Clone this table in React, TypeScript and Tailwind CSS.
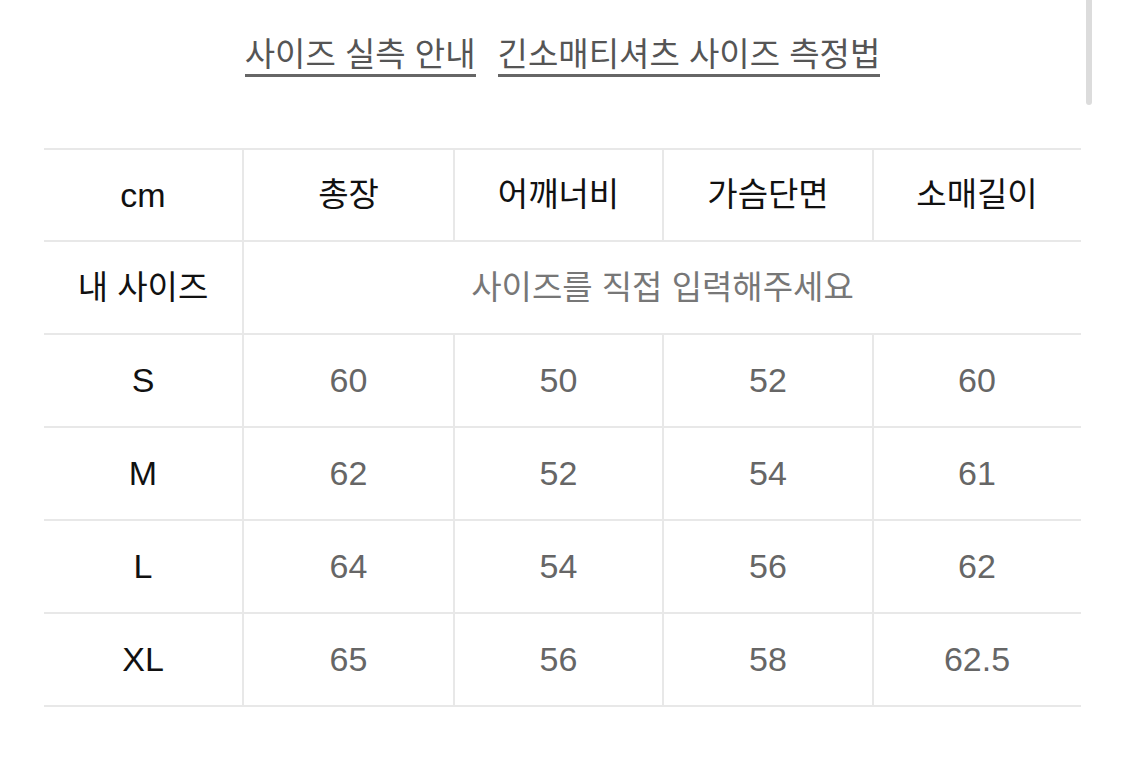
const rows = [
  { size: 'S', values: ['60', '50', '52', '60'] },
  { size: 'M', values: ['62', '52', '54', '61'] },
  { size: 'L', values: ['64', '54', '56', '62'] },
  { size: 'XL', values: ['65', '56', '58', '62.5'] },
];

const headers = ['총장', '어깨너비', '가슴단면', '소매길이'];
const colWidths = ['w-[211px]', 'w-[209px]', 'w-[210px]', 'w-[208px]'];

const font = { fontFamily: '"Liberation Sans", "Noto Sans CJK KR", sans-serif' };

export default function App() {
  return (
    <div className="relative w-[1125px] h-[764px] bg-white overflow-hidden" style={font}>
      {/* scrollbar thumb */}
      <div className="absolute right-[33px] top-0 w-[6px] h-[105px] rounded-b-full bg-[#dcdcdc]" />

      <div className="flex justify-center gap-[22px] pt-[36px] text-[33px] text-[#555]">
        <span className="leading-[38px] border-b-[3px] border-[#666]">사이즈 실측 안내</span>
        <span className="leading-[38px] border-b-[3px] border-[#666]">긴소매티셔츠 사이즈 측정법</span>
      </div>

      <div className="ml-[44px] mt-[71px] w-[1037px] border-t-2 border-[#e8e8e8]">
        <div className="flex h-[92px] border-b-2 border-[#e8e8e8] text-[#111]">
          <div className="w-[198px] flex items-center justify-center text-[34px]">cm</div>
          {headers.map((h, i) => (
            <div
              key={h}
              className={`${colWidths[i]} flex items-center justify-center border-l-2 border-[#e8e8e8] text-[33px]`}
            >
              {h}
            </div>
          ))}
        </div>

        <div className="flex h-[93px] border-b-2 border-[#e8e8e8]">
          <div className="w-[198px] flex items-center justify-center text-[33px] text-[#111]">
            내 사이즈
          </div>
          <div className="flex-1 flex items-center justify-center border-l-2 border-[#e8e8e8] text-[33px] text-[#777]">
            사이즈를 직접 입력해주세요
          </div>
        </div>

        {rows.map((r) => (
          <div key={r.size} className="flex h-[93px] border-b-2 border-[#e8e8e8]">
            <div className="w-[198px] flex items-center justify-center text-[34px] text-[#111]">{r.size}</div>
            {r.values.map((v, i) => (
              <div
                key={i}
                className={`${colWidths[i]} flex items-center justify-center border-l-2 border-[#e8e8e8] text-[34px] text-[#666]`}
              >
                {v}
              </div>
            ))}
          </div>
        ))}
      </div>
    </div>
  );
}
